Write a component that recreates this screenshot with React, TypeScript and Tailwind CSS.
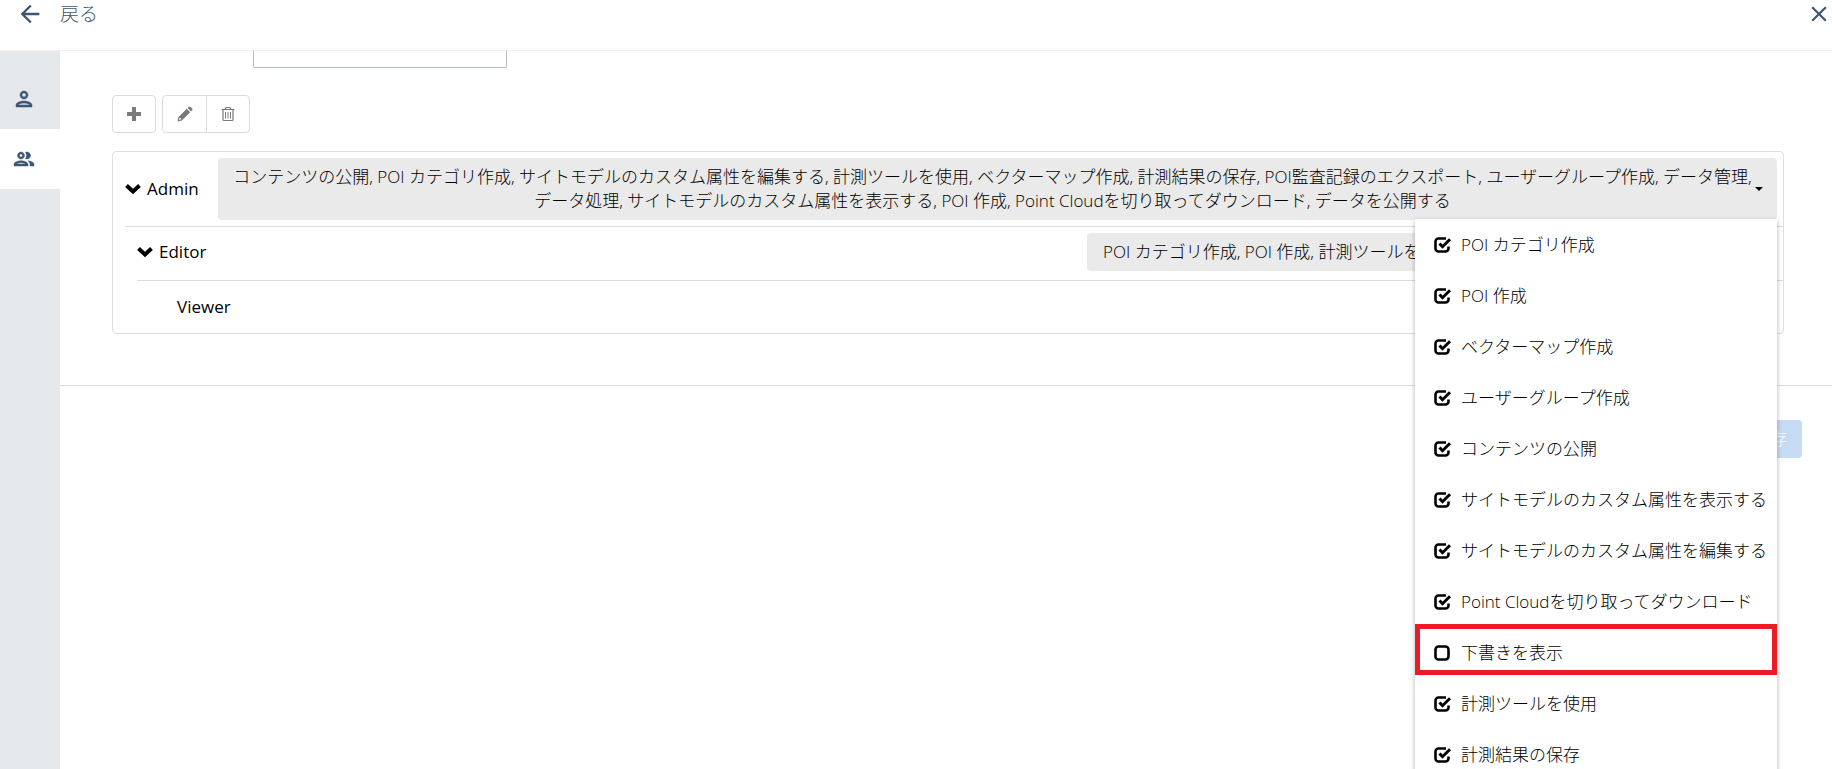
import { useState } from "react";
import { MdArrowBack, MdClose, MdOutlinePeople, MdOutlinePerson } from "react-icons/md";

const adminPermissions =
  "コンテンツの公開, POI カテゴリ作成, サイトモデルのカスタム属性を編集する, 計測ツールを使用, ベクターマップ作成, 計測結果の保存, POI監査記録のエクスポート, ユーザーグループ作成, データ管理, データ処理, サイトモデルのカスタム属性を表示する, POI 作成, Point Cloudを切り取ってダウンロード, データを公開する";

const options = [
  { label: "POI カテゴリ作成", checked: true },
  { label: "POI 作成", checked: true },
  { label: "ベクターマップ作成", checked: true },
  { label: "ユーザーグループ作成", checked: true },
  { label: "コンテンツの公開", checked: true },
  { label: "サイトモデルのカスタム属性を表示する", checked: true },
  { label: "サイトモデルのカスタム属性を編集する", checked: true },
  { label: "Point Cloudを切り取ってダウンロード", checked: true },
  { label: "下書きを表示", checked: false, highlighted: true },
  { label: "計測ツールを使用", checked: true },
  { label: "計測結果の保存", checked: true },
];

function Chevron() {
  return (
    <svg viewBox="0 0 16 12" className="w-4 h-3 shrink-0">
      <path d="M1.5 2.5 8 8.5l6.500-6" fill="none" stroke="#000" strokeWidth="4" />
    </svg>
  );
}

function PermissionOption({
  label,
  checked,
  highlighted,
}: {
  label: string;
  checked: boolean;
  highlighted?: boolean;
}) {
  const [on, setOn] = useState(checked);
  return (
    <label className="relative flex items-center h-[51px] pl-[19px] gap-[11px] whitespace-nowrap">
      <span className="grid size-4 shrink-0">
        <input
          type="checkbox"
          checked={on}
          onChange={() => setOn(!on)}
          className="appearance-none col-start-1 row-start-1 size-4"
        />
        <svg
          viewBox="0 0 16 16"
          className="col-start-1 row-start-1 size-4 overflow-visible pointer-events-none"
          fill="none"
          stroke="#000"
        >
          {on ? (
            <>
              <path
                d="M12 1.500H4.500A3 3 0 0 0 1.500 4.500V11.500A3 3 0 0 0 4.500 14.500h7A3 3 0 0 0 14.500 11.500v-2"
                strokeWidth="2.600"
              />
              <path d="m5.500 6.500 3 3.200L16 2.300" strokeWidth="3" />
            </>
          ) : (
            <rect x="1.500" y="1.500" width="13" height="13" rx="3" strokeWidth="2.600" />
          )}
        </svg>
      </span>
      {label}
      {highlighted && (
        <span className="absolute -top-[3px] inset-x-0 h-[51px] border-5 border-[#ed1c24] pointer-events-none" />
      )}
    </label>
  );
}

function Toolbar() {
  return (
    <div className="flex gap-1.5 text-[#7a7a7a]">
      <button
        aria-label="追加"
        className="flex items-center justify-center w-11 h-[38px] border border-[#dcdcdc] rounded"
      >
        <svg viewBox="0 0 14 14" className="size-3.5" fill="none" stroke="currentColor">
          <path d="M7 0v14M0 7h14" strokeWidth="4" />
        </svg>
      </button>
      <div className="flex border border-[#dcdcdc] rounded">
        <button aria-label="編集" className="flex items-center justify-center w-[43px] h-9">
          <svg viewBox="0 0 16 16" className="size-4" fill="currentColor">
            <path
              d="M10.600 2 12 .7q.8-.6 1.700.2l1.500 1.500q.8.900.1 1.600L14 5.400zM9.800 2.800l3.400 3.400-8.400 8.400L.6 15.500l.8-4.300zM2.600 12l-.5 2 2-.5-.1-1.300-1.100-.1z"
              fillRule="evenodd"
            />
          </svg>
        </button>
        <button
          aria-label="削除"
          className="flex items-center justify-center w-[43px] h-9 border-l border-[#dcdcdc]"
        >
          <svg viewBox="0 0 14 16" className="w-3.5 h-4" fill="none" stroke="currentColor">
            <path d="M.5 3.500h13M4.500 3.500v-1a1 1 0 0 1 1-1h3a1 1 0 0 1 1 1v1M2 4v9.500a1 1 0 0 0 1 1h8a1 1 0 0 0 1-1V4" strokeWidth="1.200" />
            <path d="M4.500 6v6.500M7 6v6.500M9.500 6v6.500" />
          </svg>
        </button>
      </div>
    </div>
  );
}

export default function App() {
  return (
    <div
      lang="ja"
      className="flex flex-col h-screen overflow-hidden bg-white text-black text-[17px] leading-6 font-light font-['Open_Sans','Noto_Sans_CJK_JP',sans-serif]"
    >
      <header className="flex items-start justify-between h-[51px] shrink-0 pl-4 border-b border-[#f0f0f0] text-[#3d5570]">
        <button className="flex items-center gap-4">
          <MdArrowBack size={28} />
          <span className="text-[19px]">戻る</span>
        </button>
        <button aria-label="閉じる" className="pt-px">
          <MdClose size={26} />
        </button>
      </header>

      <div className="flex flex-1 min-h-0">
        <nav className="w-[60px] shrink-0 pt-[18px] bg-[#e5e9ec] text-[#3d5570]">
          <button aria-label="ユーザー" className="flex items-center w-full h-[60px] pl-3">
            <MdOutlinePerson
              size={24}
              strokeWidth={0.5}
              className="stroke-none [&_path:not([fill=none])]:stroke-current"
            />
          </button>
          <button aria-label="グループ" className="flex items-center w-full h-[60px] pl-3 bg-white">
            <MdOutlinePeople
              size={24}
              strokeWidth={0.5}
              className="stroke-none [&_path:not([fill=none])]:stroke-current"
            />
          </button>
        </nav>

        <main className="flex-1 min-w-0">
          <div className="pl-[52px] pr-12 pb-[51px] border-b border-[#dcdcdc]">
            <input
              type="text"
              aria-label="名前"
              className="block w-[254px] h-[17px] ml-[141px] border border-t-0 border-[#b3bbc4] rounded-b-xs"
            />
            <div className="mt-[27px] mb-[18px]">
              <Toolbar />
            </div>

            <div className="pl-3 border border-[#dedede] rounded">
              <div className="flex items-center gap-5 py-1.5 pr-1.5 border-b border-[#dcdcdc]">
                <button className="flex items-center gap-1.5 w-[73px] font-normal">
                  <Chevron />
                  Admin
                </button>
                <div className="relative flex-1">
                  <button className="flex items-center w-full min-h-[62px] py-[7px] pl-3 pr-3.5 rounded bg-[#eaeaea]">
                    <span className="flex-1 text-center break-keep">{adminPermissions}</span>
                    <span className="shrink-0 border-x-4 border-t-4 border-x-transparent border-t-black" />
                  </button>
                  <div className="absolute z-10 right-0 top-[61px] w-[362px] bg-white shadow-[0_2px_5px_rgba(0,0,0,0.3)]">
                    {options.map((option) => (
                      <PermissionOption key={option.label} {...option} />
                    ))}
                  </div>
                </div>
              </div>

              <div className="pl-3">
                <div className="flex items-start justify-between h-[54px] pt-1.5 pr-1.5 border-b border-[#dcdcdc]">
                  <button className="flex items-center gap-1.5 h-[38px] font-normal">
                    <Chevron />
                    Editor
                  </button>
                  <button className="flex items-center w-[690px] h-[38px] pl-4 rounded bg-[#eaeaea]">
                    POI カテゴリ作成, POI 作成, 計測ツールを使用
                  </button>
                </div>
                <div className="flex items-center h-[52px] pl-10 font-normal">Viewer</div>
              </div>
            </div>
          </div>

          <div className="flex justify-end pt-[34px] pr-[30px]">
            <button className="h-[38px] px-[15px] rounded bg-[#c5daf3] text-white">保存</button>
          </div>
        </main>
      </div>
    </div>
  );
}
